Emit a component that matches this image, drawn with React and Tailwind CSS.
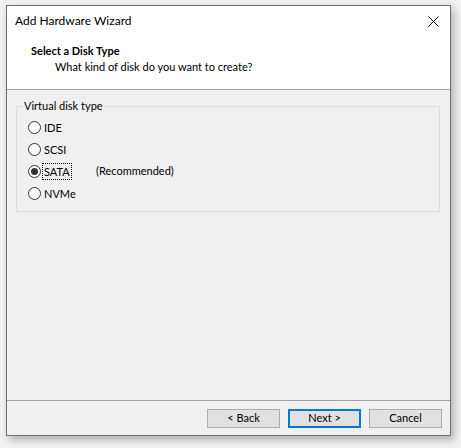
import React from "react";

const FONT = { fontFamily: '"Segoe UI", Lato, "Noto Sans", sans-serif' };

function Radio({ label, checked, focused, extra }) {
  return (
    <div className="flex items-center h-[22px]">
      <span className="w-[13px] h-[13px] rounded-full border border-[#333] bg-white flex items-center justify-center shrink-0">
        {checked && <span className="w-[7px] h-[7px] rounded-full bg-[#333]" />}
      </span>
      <div className="ml-[2px] w-[53px] shrink-0 flex">
        <span className={`leading-[15px] px-px ${focused ? "outline outline-1 outline-dotted outline-black" : ""}`}>
          {label}
        </span>
      </div>
      {extra && <span>{extra}</span>}
    </div>
  );
}

function Button({ children, primary }) {
  return (
    <button
      className={`w-[73px] h-[19px] bg-[#e1e1e1] text-[11px] text-black flex items-center justify-center ${
        primary ? "border-2 border-[#0078d7]" : "border border-[#adadad]"
      }`}
    >
      {children}
    </button>
  );
}

export default function App() {
  return (
    <div className="w-[461px] h-[448px] bg-[#f2f2f2] pt-[5px] pl-[6px] text-[11px] text-black" style={FONT}>
      <div className="w-[445px] h-[431px] border border-[#707070] bg-[#f0f0f0] flex flex-col shadow-[3px_4px_8px_rgba(0,0,0,0.28)]">
        {/* title bar */}
        <div className="h-[30px] bg-white flex items-center pl-[8px] pr-[11px]">
          <span className="text-[12px] leading-[16px]">Add Hardware Wizard</span>
          <svg className="ml-auto" width="11" height="11" viewBox="0 0 11 11">
            <path d="M0.5 0.5 L10.5 10.5 M10.5 0.5 L0.5 10.5" stroke="#000" strokeWidth="1" />
          </svg>
        </div>

        {/* header */}
        <div className="h-[54px] bg-white border-b border-[#a0a0a0] pt-[7px] flex flex-col">
          <div className="flex leading-[16px]">
            <span className="w-[24px] shrink-0" />
            <span className="font-bold">Select a Disk Type</span>
          </div>
          <div className="flex leading-[16px]">
            <span className="w-[48px] shrink-0" />
            <span>What kind of disk do you want to create?</span>
          </div>
        </div>

        {/* body */}
        <div className="flex-1 pt-[8px] pl-[9px] pr-[10px]">
          <fieldset className="border border-[#dcdcdc] pl-[11px] pt-[2px] pb-[7px]">
            <legend className="ml-[-5px] px-[1px] leading-[16px]">Virtual disk type</legend>
            <Radio label="IDE" />
            <Radio label="SCSI" />
            <Radio label="SATA" checked focused extra="(Recommended)" />
            <Radio label="NVMe" />
          </fieldset>
        </div>

        {/* footer */}
        <div className="h-[35px] border-t border-[#a0a0a0] flex justify-end items-start pt-[8px] pr-[8px] gap-[8px]">
          <Button>&lt; Back</Button>
          <Button primary>Next &gt;</Button>
          <Button>Cancel</Button>
        </div>
      </div>
    </div>
  );
}
